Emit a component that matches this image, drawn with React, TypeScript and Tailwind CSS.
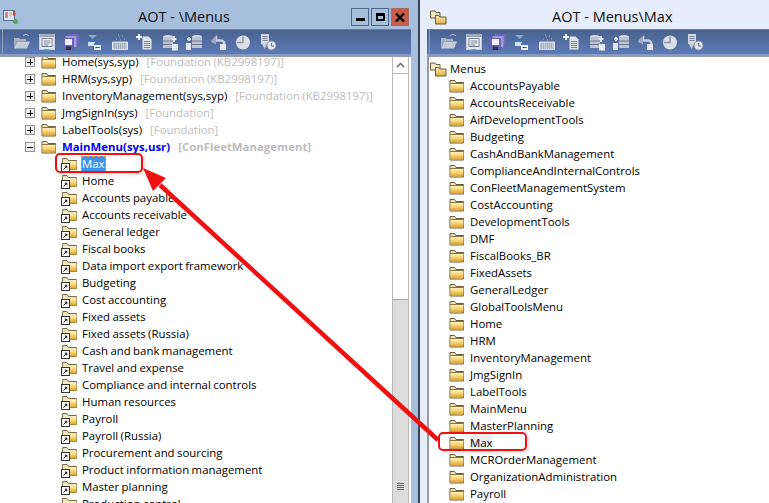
const Folder = () => (
  <svg width="16" height="14" viewBox="0 0 16 14" className="shrink-0">
    <defs>
      <linearGradient id="fg" x1="0" y1="0" x2="0" y2="1">
        <stop offset="0" stopColor="#fff6c4" />
        <stop offset="0.5" stopColor="#f6d475" />
        <stop offset="1" stopColor="#dd9f2c" />
      </linearGradient>
    </defs>
    <path d="M1 3.500V1.500h4.500l1.500 2h7.500v9.500H1z" fill="#efe4c0" stroke="#6b5a35" strokeWidth="1" />
    <rect x="1.500" y="4.500" width="13" height="8" fill="url(#fg)" />
    <path d="M1 4.500h14" stroke="#8a7440" strokeWidth="1" />
  </svg>
);

const ShortcutFolder = () => (
  <svg width="17" height="15" viewBox="0 0 17 15" className="shrink-0">
    <defs>
      <linearGradient id="sg" x1="0" y1="0" x2="0" y2="1">
        <stop offset="0" stopColor="#fff6c4" />
        <stop offset="0.5" stopColor="#f6d475" />
        <stop offset="1" stopColor="#dd9f2c" />
      </linearGradient>
    </defs>
    <path d="M1.500 3.500V1.500h4.500l1.500 2h8v9h-14z" fill="#e9e0c4" stroke="#7a6a42" strokeWidth="1" />
    <rect x="2" y="4.500" width="13.500" height="8" fill="url(#sg)" />
    <rect x="0.500" y="6.500" width="8" height="8" fill="#fff" stroke="#333" strokeWidth="1" />
    <path d="M2.500 12.500 5.500 9.500M3.800 9.200h2v2" fill="none" stroke="#000" strokeWidth="1" />
  </svg>
);

const OpenFolders = () => (
  <svg width="17" height="15" viewBox="0 0 17 15" className="shrink-0">
    <defs>
      <linearGradient id="og" x1="0" y1="0" x2="0" y2="1">
        <stop offset="0" stopColor="#fff3b8" />
        <stop offset="1" stopColor="#e3a93a" />
      </linearGradient>
    </defs>
    <path d="M.5 8V1h4.500l1 1.500h4V8z" fill="#f3e9c6" stroke="#6b5a35" />
    <path d="M5.500 14V5.500h3l1 1.500h6.500V14z" fill="url(#og)" stroke="#6b5a35" />
  </svg>
);

const Expander = ({ open }: { open?: boolean }) => (
  <span className="relative w-[10px] h-[10px] shrink-0 border border-[#8f8f8f] bg-[#f0f0f0] flex items-center justify-center">
    <span className="absolute w-[6px] h-px bg-black" />
    {!open && <span className="absolute w-px h-[6px] bg-black" />}
  </span>
);

const icons = [
  <g key="0">
    <path d="M1 15V5h5l1 1h6v2H4L1 15z" fill="#a9b3c4" />
    <path d="M4 8.500h13L14 15.500H1z" fill="#c5ccd8" />
    <path d="M10 3c2-2 4-2 6 0" fill="none" stroke="#c8cfdb" strokeWidth="1" />
  </g>,
  <g key="1">
    <rect x="1.500" y="1.500" width="15" height="15" fill="#e5e8ee" stroke="#c3c8d2" />
    <rect x="1.500" y="1.500" width="15" height="2.500" fill="#9aa3b5" />
    <rect x="4" y="5.500" width="10" height="8" fill="#fff" stroke="#6f7b93" />
    <path d="M5.500 8h7M5.500 10h7M5.500 12h5" stroke="#6f7b93" />
    <rect x="6" y="16" width="5" height="1.500" fill="#39b6d8" />
  </g>,
  <g key="2">
    <rect x="6" y="1" width="11" height="11" fill="#6f68b8" />
    <rect x="3.500" y="3" width="11" height="11" fill="#a09cdc" />
    <rect x="1" y="5" width="11" height="12" fill="#6a62b8" />
    <rect x="3" y="6" width="7" height="6" fill="#eef1f8" />
    <rect x="4" y="13.500" width="5" height="3.500" fill="#2c3048" />
  </g>,
  <g key="3">
    <path d="M1 2h9L5.500 6z" fill="#8fa7cf" />
    <rect x="1" y="7" width="7" height="6" fill="#d8dee9" />
    <rect x="1" y="7" width="7" height="2" fill="#3a78c8" />
    <rect x="7" y="10" width="7" height="7" fill="#eef1f6" />
    <rect x="7" y="10" width="7" height="2" fill="#3a78c8" />
    <rect x="8.500" y="14" width="4" height="1" fill="#39506f" />
  </g>,
  <g key="4">
    <path d="M1.500 9h15v7.500h-15z" fill="#c2c9d6" stroke="#dfe3ea" />
    <path d="M3 11h12M3 13h12M3 15h12" stroke="#8c95a8" strokeDasharray="1 1" />
    <path d="M5 6h1M8 4h1M11 3h1M13 6h1M9 7h1M7 2h1" stroke="#a7b0c2" />
  </g>,
  <g key="5">
    <path d="M6.500 3.500h6l3 3v10h-9z" fill="#dfe3ea" />
    <path d="M8 8.500h6M8 10.500h6M8 12.500h6M8 14.500h6" stroke="#7b869c" />
    <path d="M3 1v6M0 4h6" stroke="#eef1f6" strokeWidth="2" />
  </g>,
  <g key="6">
    <ellipse cx="7" cy="4" rx="5" ry="2" fill="#d6dbe5" />
    <rect x="2" y="4" width="10" height="11" fill="#bcc3d0" />
    <path d="M2 8h10M2 11.500h10" stroke="#6f7b93" />
    <rect x="11" y="11" width="6" height="6.500" fill="#e6e9ef" />
    <path d="M13 3v6M10.500 6h5" stroke="#e2e6ee" strokeWidth="2" />
  </g>,
  <g key="7">
    <ellipse cx="12" cy="4" rx="5" ry="2" fill="#d6dbe5" />
    <rect x="7" y="4" width="10" height="11" fill="#bcc3d0" />
    <path d="M7 8h10M7 11.500h10" stroke="#6f7b93" />
    <rect x="1" y="10" width="5" height="7" fill="#e6e9ef" />
    <path d="M2 6h4M4 4v4" stroke="#e2e6ee" strokeWidth="2" />
  </g>,
  <g key="8">
    <path d="M2 9 6 5v2.500h5c3 0 4 3 3 6" fill="none" stroke="#c7cdd9" strokeWidth="2.500" />
    <rect x="10" y="11" width="6" height="6" fill="#e6e9ef" />
    <path d="M1 8l5-5v9z" fill="#9ea8bb" />
  </g>,
  <g key="9">
    <circle cx="9" cy="9.500" r="7" fill="#dadfe8" />
    <path d="M9 3.500v6H3" fill="none" stroke="#8893a8" strokeWidth="1.500" />
  </g>,
  <g key="10">
    <rect x="2" y="1" width="8" height="10" fill="#d3d8e2" />
    <path d="M3.500 3.500h5M3.500 5.500h5M3.500 7.500h5" stroke="#7b869c" />
    <path d="M3 11h5l-2.500 5z" fill="#c9cfdb" />
    <circle cx="12.500" cy="12.500" r="4.500" fill="#e1e5ec" stroke="#8893a8" />
    <path d="M12.500 10v3h2.500" fill="none" stroke="#667189" />
  </g>,
];

const Toolbar = () => (
  <div className="h-[26px] shrink-0 flex items-center pl-[2px] border-t border-[#6a81ab] border-b-[#7d98c9] border-b bg-gradient-to-b from-[#49628f] to-[#5c7ab6]">
    <span className="w-px h-[26px] bg-[#8b9dbd] mr-[10px] shrink-0" />
    {icons.map((ic, i) => (
      <span key={i} className="w-[24.6px] shrink-0 flex">
        <svg width="18" height="18" viewBox="0 0 18 18">{ic}</svg>
      </span>
    ))}
  </div>
);

const leftTop = [
  ["Home(sys,syp)", "[Foundation (KB2998197)]"],
  ["HRM(sys,syp)", "[Foundation (KB2998197)]"],
  ["InventoryManagement(sys,syp)", "[Foundation (KB2998197)]"],
  ["JmgSignIn(sys)", "[Foundation]"],
  ["LabelTools(sys)", "[Foundation]"],
];

const leftChildren = [
  "Home", "Accounts payable", "Accounts receivable", "General ledger", "Fiscal books",
  "Data import export framework", "Budgeting", "Cost accounting", "Fixed assets",
  "Fixed assets (Russia)", "Cash and bank management", "Travel and expense",
  "Compliance and internal controls", "Human resources", "Payroll", "Payroll (Russia)",
  "Procurement and sourcing", "Product information management", "Master planning", "Production control",
];

const rightItems = [
  "AccountsPayable", "AccountsReceivable", "AifDevelopmentTools", "Budgeting", "CashAndBankManagement",
  "ComplianceAndInternalControls", "ConFleetManagementSystem", "CostAccounting", "DevelopmentTools", "DMF",
  "FiscalBooks_BR", "FixedAssets", "GeneralLedger", "GlobalToolsMenu", "Home", "HRM", "InventoryManagement",
  "JmgSignIn", "LabelTools", "MainMenu", "MasterPlanning", "Max", "MCROrderManagement",
  "OrganizationAdministration", "Payroll",
];

export default function App() {
  return (
    <div className="relative w-[769px] h-[503px] overflow-hidden flex bg-white text-black text-[11.4px] [word-spacing:-0.5px] font-['Open_Sans',sans-serif]">
      {/* Left window */}
      <div className="w-[418px] shrink-0 h-full flex flex-col bg-[#a6bfdc]">
        <div className="h-[29px] shrink-0 flex items-center pl-[3px] pr-[9px] pt-[5px]">
          <svg width="15" height="16" viewBox="0 0 15 16" className="shrink-0">
            <rect x="0.500" y="1.500" width="11" height="10" fill="#dfe7f5" stroke="#5c6f94" />
            <path d="M2 4h3M2 6h3M2 8h3" stroke="#c03030" />
            <path d="M6 4h3M6 6h3" stroke="#e8a020" />
            <path d="M10 1l3 4-3 2z" fill="#d83a2a" />
            <circle cx="12.500" cy="12.500" r="2.500" fill="#4caf50" />
          </svg>
          <div className="flex-1 text-center text-[14.5px] [word-spacing:0] text-[#101010] pr-[1px]">AOT - \Menus</div>
          <div className="flex gap-[2px]">
            <span className="w-[18px] h-[18px] border border-[#4d6685] flex items-center justify-center"><span className="w-[9px] h-[3px] bg-black mt-[4px]" /></span>
            <span className="w-[18px] h-[18px] border border-[#4d6685] flex items-center justify-center"><span className="w-[9px] h-[8px] border-2 border-black border-t-[3px]" /></span>
            <span className="w-[18px] h-[18px] border border-[#a66a5a] bg-[#c75c4a] flex items-center justify-center">
              <svg width="10" height="9" viewBox="0 0 10 9"><path d="M1 .5 9 8.500M9 .5 1 8.500" stroke="#000" strokeWidth="2.200" /></svg>
            </span>
          </div>
        </div>
        <div className="w-[411px]"><Toolbar /></div>
        <div className="w-[411px] flex-1 min-h-0 flex bg-white border-t-2 border-[#9b9b9b] overflow-hidden">
          <div className="w-[392px] shrink-0 overflow-hidden">
            <div className="-mt-[3.5px]">
              {leftTop.map(([a, b]) => (
                <div key={a} className="h-[17px] flex items-center whitespace-nowrap pl-[25px]">
                  <Expander />
                  <span className="ml-[6px] flex"><Folder /></span>
                  <span className="ml-[5px]">{a}</span>
                  <span className="ml-[8px] text-[#bdbdbd]">{b}</span>
                </div>
              ))}
              <div className="h-[17px] flex items-center whitespace-nowrap pl-[25px] font-bold">
                <Expander open />
                <span className="ml-[6px] flex"><Folder /></span>
                <span className="ml-[5px] text-[#0000f0]">MainMenu(sys,usr)</span>
                <span className="ml-[8px] text-[#bdbdbd]">[ConFleetManagement]</span>
              </div>
              <div className="h-[17px] flex items-center whitespace-nowrap pl-[61px]">
                <ShortcutFolder />
                <span className="ml-[3px] h-[16px] leading-[13px] -mt-[1px] bg-[#3d94ee] text-white border border-dashed border-[#d99a4a]">Max</span>
              </div>
              {leftChildren.map((t) => (
                <div key={t} className="h-[17px] flex items-center whitespace-nowrap pl-[61px]">
                  <ShortcutFolder />
                  <span className="ml-[4px]">{t}</span>
                </div>
              ))}
            </div>
          </div>
          <div className="w-[17px] shrink-0 flex flex-col border-x border-[#b9b9b9]">
            <div className="h-[17px] shrink-0 flex items-center justify-center border-b border-[#b9b9b9]">
              <svg width="9" height="6" viewBox="0 0 9 6"><path d="M1 5 4.500 1.500 8 5" fill="none" stroke="#606060" strokeWidth="1.300" /></svg>
            </div>
            <div className="h-[225px] shrink-0" />
            <div className="flex-1 bg-[#dcdcdc] border-t border-[#a8a8a8] flex flex-col items-center justify-end pb-[13px] gap-[1px]">
              <span className="w-[7px] h-px bg-[#606060]" />
              <span className="w-[7px] h-px bg-[#606060]" />
              <span className="w-[7px] h-px bg-[#606060]" />
              <span className="w-[7px] h-px bg-[#606060]" />
            </div>
          </div>
        </div>
      </div>

      <div className="w-[2px] shrink-0 bg-[#3a4658]" />

      {/* Right window */}
      <div className="flex-1 min-w-0 h-full flex flex-col bg-[#e6edfc] pl-[7px]">
        <div className="h-[29px] shrink-0 flex items-center pt-[5px] pl-[3px]">
          <OpenFolders />
          <div className="text-[14.5px] [word-spacing:0] text-[#101010] ml-[105px] whitespace-nowrap">AOT - Menus\Max</div>
        </div>
        <Toolbar />
        <div className="flex-1 min-h-0 bg-white border-t-2 border-l-2 border-[#9b9b9b] overflow-hidden">
          <div className="mt-[3.5px]">
            <div className="h-[17px] flex items-center whitespace-nowrap pl-[1px]">
              <OpenFolders />
              <span className="ml-[3px]">Menus</span>
            </div>
            {rightItems.map((t) => (
              <div key={t} className="h-[17px] flex items-center whitespace-nowrap pl-[20px]">
                <Folder />
                <span className={t === "Max" ? "ml-[5px] bg-[#eeeeee]" : "ml-[5px]"}>{t}</span>
              </div>
            ))}
          </div>
        </div>
      </div>

      {/* Annotations */}
      <div className="absolute left-[55px] top-[153px] w-[88px] h-[20px] rounded-[5px] border-2 border-[#f01010] shadow-[2px_2px_3px_rgba(0,0,0,0.12)]" />
      <div className="absolute left-[438px] top-[432px] w-[89px] h-[19px] rounded-[5px] border-2 border-[#f01010] shadow-[2px_2px_3px_rgba(0,0,0,0.12)]" />
      <svg className="absolute left-0 top-0" width="769" height="503" viewBox="0 0 769 503">
        <path d="M160 185 438 440" stroke="#f01010" strokeWidth="4.500" fill="none" />
        <path d="M143 168 166 178 153 191z" fill="#f01010" />
      </svg>
    </div>
  );
}
